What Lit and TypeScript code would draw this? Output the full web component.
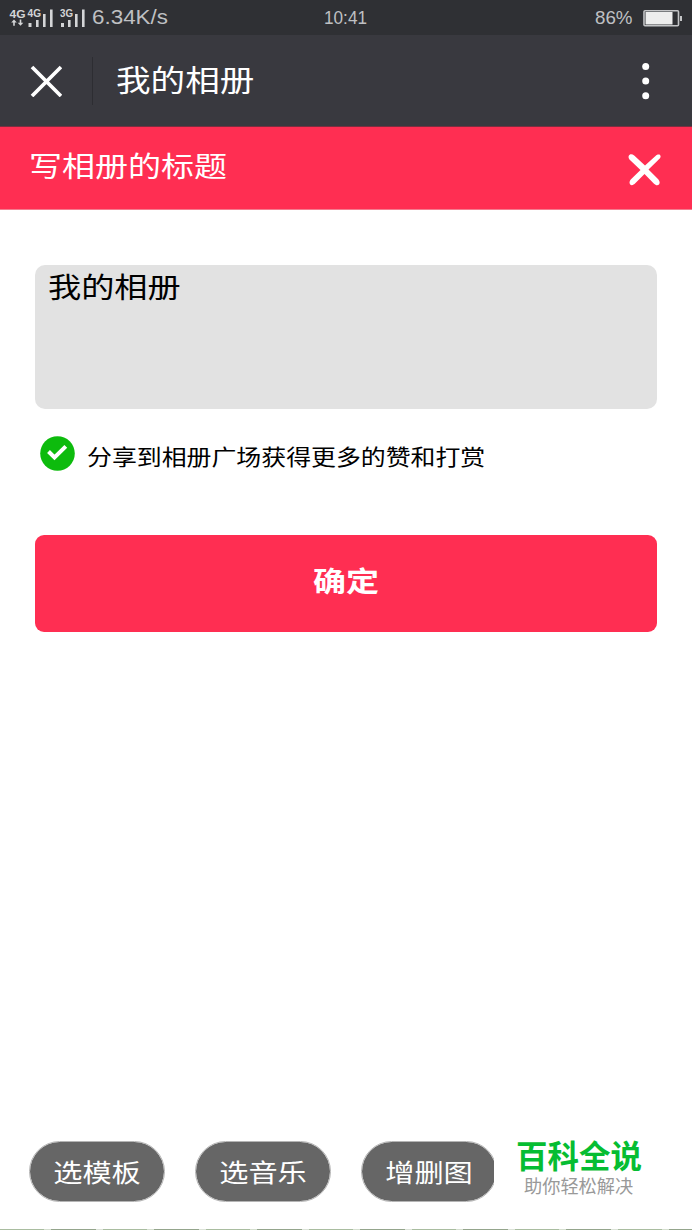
import { LitElement, html, css, svg } from "lit";
import { customElement } from "lit/decorators.js";

@customElement("status-bar")
class StatusBar extends LitElement {
  static styles = css`
    :host {
      display: grid;
      grid-template-columns: 1fr auto 1fr;
      height: 35px;
      box-sizing: border-box;
      padding: 0 9px 0 8px;
      background: #2f3034;
      color: #bfc0c3;
      font: 19px/34px "Liberation Sans", sans-serif;
    }
    .left, .right { display: flex; align-items: center; }
    .right { justify-content: flex-end; gap: 10px; }
    .speed { margin-left: 3px; }
    svg { display: block; overflow: visible; }
    .net { font: bold 10px "Liberation Sans", sans-serif; }
  `;
  render() {
    return html`
      <div class="left">
        <svg width="80" height="34" viewBox="8 0 80 34" fill="#d4d5d7">
          <g class="net">
            <text x="9.5" y="17" textLength="16" lengthAdjust="spacingAndGlyphs" font-size="11">4G</text>
            <text x="27.5" y="16" textLength="13.5" lengthAdjust="spacingAndGlyphs">4G</text>
            <text x="60" y="16" textLength="13" lengthAdjust="spacingAndGlyphs">3G</text>
          </g>
          <path d="M14 18.5l-2.800 3h2v3.200h1.600v-3.200h2zM20.500 24.800l-2.800-3h2v-3.200h1.600v3.200h2z" />
          <path d="M28.500 22h3v4h-3zM36 19h2.600v7H36zM43 13h2.600v13H43zM50 8.500h2.600V26H50zM61 22h3v4h-3zM68 19h2.600v7H68zM75 13h2.600v13H75zM82 8.500h2.600V26H82z" />
        </svg>
        <svg class="speed" width="80" height="34" fill="#bfc0c3"><text x="1" y="23" font-size="20" textLength="76" lengthAdjust="spacingAndGlyphs">6.34K/s</text></svg>
      </div>
      <svg width="46" height="34" fill="#bfc0c3"><text x="1" y="23.500" font-size="19" textLength="43" lengthAdjust="spacingAndGlyphs">10:41</text></svg>
      <div class="right">
        <svg width="38" height="34" fill="#bfc0c3"><text x="0" y="22.500" font-size="19" textLength="37.500" lengthAdjust="spacingAndGlyphs">86%</text></svg>
        <svg width="40" height="34" viewBox="643 0 40 34">
          <rect x="644" y="9.700" width="34.500" height="15" rx="1" fill="none" stroke="#c4c5c7" stroke-width="1.600" />
          <path d="M645.500 11h27v12.500h-27z" fill="#ededed" />
          <path d="M680 15h2v5h-2z" fill="#c4c5c7" />
        </svg>
      </div>`;
  }
}

@customElement("brush-text")
class BrushText extends LitElement {
  static styles = css`
    :host { display: block; white-space: nowrap; }
    .glyphs { transform: scaleY(0.86); }
  `;
  render() {
    return html`<div class="glyphs"><slot></slot></div>`;
  }
}

@customElement("app-root")
class AppRoot extends LitElement {
  static styles = css`
    :host {
      display: flex;
      flex-direction: column;
      height: 1230px;
      overflow: hidden;
      background: #fff;
      font-family: "Noto Sans CJK SC", sans-serif;
      color: #000;
    }
    svg { display: block; flex: none; }
    .nav {
      display: flex;
      align-items: center;
      height: 92px;
      background: #39393f;
      border-bottom: 1px solid #7a2f40;
      box-sizing: border-box;
      padding: 1px 34px 0 30px;
      color: #fff;
    }
    .rule { width: 1px; height: 48px; background: #2d2d32; margin: 0 23px 0 30px; }
    .title { flex: 1; font-size: 34.6px; line-height: 40px; padding-bottom: 7px; }
    .banner {
      display: flex;
      align-items: center;
      justify-content: space-between;
      height: 83px;
      box-sizing: border-box;
      background: #ff2e52;
      border-bottom: 1px solid #f47c8e;
      padding: 0 31px 0 29px;
      color: #fff;
      font-size: 33px;
      line-height: 40px;
    }
    .banner brush-text { padding-bottom: 6px; }
    .banner svg { margin-top: 4px; }
    .form { display: flex; flex-direction: column; padding: 55px 35px 0; }
    .field {
      height: 144px;
      box-sizing: border-box;
      padding: 1px 13px;
      border-radius: 10px;
      background: #e2e2e2;
      font-size: 33.2px;
      line-height: 40px;
    }
    .share { display: flex; align-items: center; gap: 12px; height: 36px; margin: 27px 0 0 5px; font-size: 24.9px; line-height: 30px; }
    .share svg { margin-bottom: 1px; }
    .share brush-text { padding-top: 4px; }
    .confirm {
      height: 97px;
      margin-top: 63px;
      border-radius: 9px;
      background: #ff2e52;
      color: #fff;
      text-align: center;
      font-size: 33px;
      font-weight: 700;
      line-height: 90px;
    }
    .footer { display: flex; margin-top: auto; height: 88px; padding-left: 29px; }
    .pill {
      width: 136px;
      height: 61px;
      box-sizing: border-box;
      border: 1px solid #b5b5b5;
      border-radius: 31px;
      background: #666;
      background-clip: padding-box;
      color: #fff;
      text-align: center;
      font-size: 29.2px;
      line-height: 59px;
      margin-right: 30px;
    }
    .crop { width: 133px; height: 61px; overflow: hidden; }
    .brand { display: flex; flex-direction: column; margin-left: 22px; }
    .name { color: #06bd32; font-size: 31.5px; font-weight: 700; line-height: 34px; margin-top: -4px; }
    .slogan { color: #999; font-size: 18.2px; line-height: 24px; padding-left: 8px; margin-top: 2px; }
    .edge {
      height: 1px;
      background: repeating-linear-gradient(90deg, #a9bda0 0 44px, #d5dfcf 44px 51px, #94a58c 51px 96px, #dce3d8 96px 103px);
    }
  `;
  render() {
    return html`
      <status-bar></status-bar>
      <div class="nav">
        <svg width="32" height="32" viewBox="0 0 32 32" stroke="#fff" stroke-width="3.700"><path d="M2 2l29 29M31 2L2 31" /></svg>
        <div class="rule"></div>
        <brush-text class="title">我的相册</brush-text>
        <svg width="24" height="40" viewBox="0 0 24 40" fill="#fff">
          ${[5.5, 20, 34.8].map((y) => svg`<circle cx="11.700" cy=${y} r="3.500" />`)}
        </svg>
      </div>
      <div class="banner">
        <brush-text>写相册的标题</brush-text>
        <svg width="33" height="32" viewBox="0 0 33 32" fill="#fff">
          <path d="M.7 2C1.5-.2 4-.3 6.200 1.500L17 11.500 27.500 2C29.500.2 32 0 32.500 2 33 3.500 31.500 5 30 6.200L20.500 15.500 30 25C32 27.500 32 29 31 30.500 29.500 32 27.500 31.200 26 29.800L16.500 20 7.500 29C5.500 31.200 3.500 31.800 2.200 30.500 1 29 1.500 27 3 25.300L12.500 16 2.500 6.500C1 5 .2 3.500.7 2z" />
        </svg>
      </div>
      <div class="form">
        <div class="field"><brush-text>我的相册</brush-text></div>
        <div class="share">
          <svg width="35" height="35" viewBox="0 0 35 35">
            <circle cx="17.500" cy="17.500" r="17.300" fill="#0dbb0d" />
            <path d="M8.500 15.500l6 6L25.800 10.300" fill="none" stroke="#fff" stroke-width="4" />
          </svg>
          <brush-text>分享到相册广场获得更多的赞和打赏</brush-text>
        </div>
        <div class="confirm"><brush-text>确定</brush-text></div>
      </div>
      <div class="footer">
        <div class="pill"><brush-text>选模板</brush-text></div>
        <div class="pill"><brush-text>选音乐</brush-text></div>
        <div class="crop"><div class="pill"><brush-text>增删图</brush-text></div></div>
        <div class="brand">
          <div class="name">百科全说</div>
          <div class="slogan">助你轻松解决</div>
        </div>
      </div>
      <div class="edge"></div>`;
  }
}
